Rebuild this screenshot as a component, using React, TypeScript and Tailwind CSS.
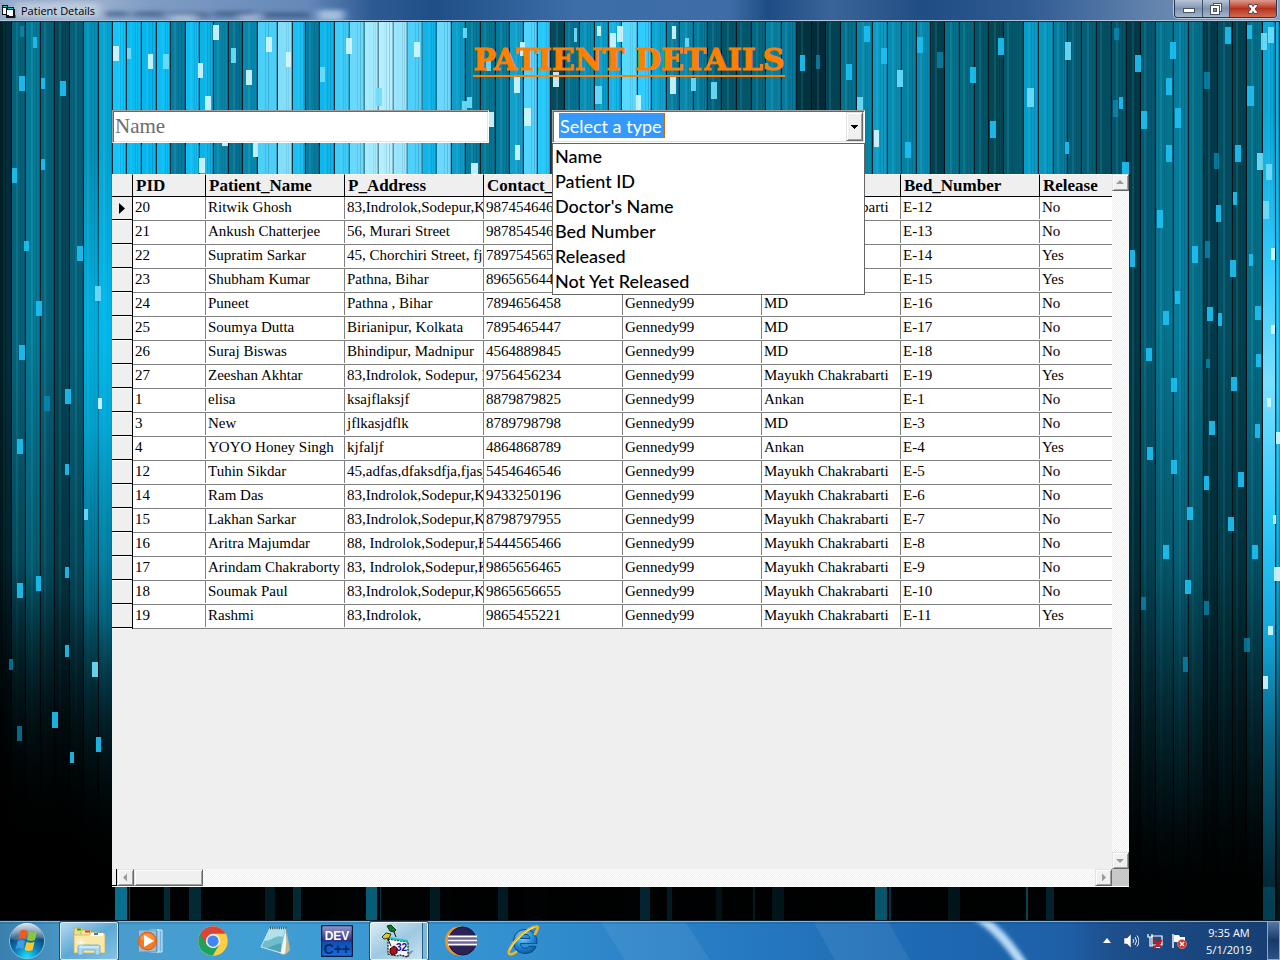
import { useState } from "react";

/* ---------- data ---------- */

const patients: string[][] = [
  ["20", "Ritwik Ghosh", "83,Indrolok,Sodepur,KOLKATA", "9874546461", "Gennedy99", "Mayukh Chakrabarti", "E-12", "No"],
  ["21", "Ankush Chatterjee", "56, Murari Street", "9878545462", "Gennedy99", "MD", "E-13", "No"],
  ["22", "Supratim Sarkar", "45, Chorchiri Street, fjasj", "7897545653", "Gennedy99", "MD", "E-14", "Yes"],
  ["23", "Shubham Kumar", "Pathna, Bihar", "8965656449", "Gennedy99", "MD", "E-15", "Yes"],
  ["24", "Puneet", "Pathna , Bihar", "7894656458", "Gennedy99", "MD", "E-16", "No"],
  ["25", "Soumya Dutta", "Birianipur, Kolkata", "7895465447", "Gennedy99", "MD", "E-17", "No"],
  ["26", "Suraj Biswas", "Bhindipur, Madnipur", "4564889845", "Gennedy99", "MD", "E-18", "No"],
  ["27", "Zeeshan Akhtar", "83,Indrolok, Sodepur, Kolkata", "9756456234", "Gennedy99", "Mayukh Chakrabarti", "E-19", "Yes"],
  ["1", "elisa", "ksajflaksjf", "8879879825", "Gennedy99", "Ankan", "E-1", "No"],
  ["3", "New", "jflkasjdflk", "8789798798", "Gennedy99", "MD", "E-3", "No"],
  ["4", "YOYO Honey Singh", "kjfaljf", "4864868789", "Gennedy99", "Ankan", "E-4", "Yes"],
  ["12", "Tuhin Sikdar", "45,adfas,dfaksdfja,fjasjf", "5454646546", "Gennedy99", "Mayukh Chakrabarti", "E-5", "No"],
  ["14", "Ram Das", "83,Indrolok,Sodepur,Kolkata", "9433250196", "Gennedy99", "Mayukh Chakrabarti", "E-6", "No"],
  ["15", "Lakhan Sarkar", "83,Indrolok,Sodepur,Kolkata", "8798797955", "Gennedy99", "Mayukh Chakrabarti", "E-7", "No"],
  ["16", "Aritra Majumdar", "88, Indrolok,Sodepur,Kolkata", "5444565466", "Gennedy99", "Mayukh Chakrabarti", "E-8", "No"],
  ["17", "Arindam Chakraborty", "83, Indrolok,Sodepur,Kolkata", "9865656465", "Gennedy99", "Mayukh Chakrabarti", "E-9", "No"],
  ["18", "Soumak Paul", "83,Indrolok,Sodepur,KOLKATA", "9865656655", "Gennedy99", "Mayukh Chakrabarti", "E-10", "No"],
  ["19", "Rashmi", "83,Indrolok,", "9865455221", "Gennedy99", "Mayukh Chakrabarti", "E-11", "Yes"],
];

const headings = ["PID", "Patient_Name", "P_Address", "Contact_No", "User_ID", "Doctor", "Bed_Number", "Release"];

const filters = ["Name", "Patient ID", "Doctor's Name", "Bed Number", "Released", "Not Yet Released"];

/* ---------- backdrop ---------- */

/* Left edge and colour of each vertical band; a band ends where the next one starts. */
const bands: [number, string][] = [
  [0, "#01303d"], [12, "#04627a"], [26, "#057a96"], [41, "#06617a"], [55, "#04485a"], [70, "#056078"],
  [84, "#0590b5"], [99, "#07a4d2"], [113, "#14c4fa"], [127, "#08bcf2"], [142, "#06b6ec"], [157, "#0bbdf2"],
  [171, "#067a9c"], [186, "#10bdf2"], [200, "#0cb4e6"], [214, "#0884a8"], [229, "#067090"], [243, "#0888ac"],
  [258, "#4ccff6"], [278, "#84defa"], [293, "#18c0f4"], [306, "#067da0"], [320, "#10b6ea"], [335, "#3fccf9"],
  [350, "#6ad8fb"], [365, "#a6eafe"], [379, "#b4eeff"], [394, "#9ae4fc"], [408, "#4ed0fa"], [423, "#10b4e8"],
  [437, "#6ad9fd"], [452, "#0c9dc8"], [466, "#067a9a"], [481, "#057591"], [496, "#067a9a"], [510, "#12a0cc"],
  [524, "#50d4ff"], [538, "#26c8fb"], [551, "#054a5c"], [565, "#067090"], [580, "#0a90b4"], [595, "#0a9cc4"],
  [609, "#10b4e8"], [622, "#58daff"], [638, "#30caff"], [652, "#0ca4d0"], [667, "#087fa0"], [680, "#0a88ac"],
  [694, "#067a9a"], [708, "#05607a"], [722, "#045468"], [737, "#04566a"], [752, "#056880"], [766, "#0680a0"],
  [782, "#07789a"], [797, "#023440"], [812, "#022c38"], [826, "#034555"], [841, "#05708c"], [857, "#0786a8"],
  [873, "#0b9cc6"], [888, "#088cb2"], [902, "#0680a0"], [917, "#0888ac"], [931, "#034050"], [945, "#05708a"],
  [960, "#05687f"], [975, "#045468"], [989, "#034654"], [1004, "#04586c"], [1024, "#0a9cc8"], [1039, "#0796be"],
  [1054, "#067c9c"], [1068, "#045c72"], [1082, "#045e74"], [1097, "#034e60"], [1112, "#035468"], [1127, "#023a48"],
  [1141, "#035a70"], [1156, "#05748f"], [1174, "#067b9b"], [1189, "#056d86"], [1204, "#023c4a"], [1218, "#034e60"],
  [1233, "#02414f"], [1247, "#056c86"], [1263, "#0aa8d8"], [1276, "#0bb4e6"], [1280, "#000000"],
];

/* x, y, width, height, brightness 0 (faint) to 3 (white) */
const sparks: number[][] = [
  [20, 26, 4, 11, 0], [33, 37, 4, 11, 1], [113, 46, 6, 15, 3], [127, 48, 4, 11, 2], [148, 54, 5, 15, 3], [163, 54, 6, 15, 2],
  [213, 25, 6, 15, 3], [198, 63, 5, 15, 3], [231, 48, 5, 15, 2], [246, 70, 6, 15, 3], [205, 96, 6, 14, 3], [266, 37, 6, 15, 3],
  [286, 52, 5, 15, 3], [320, 67, 5, 15, 2], [346, 38, 6, 16, 3], [414, 42, 6, 15, 3], [376, 88, 6, 18, 2], [19, 76, 6, 15, 1],
  [41, 78, 4, 11, 1], [60, 81, 6, 15, 1], [41, 159, 4, 11, 1], [12, 168, 5, 15, 1], [222, 140, 6, 6, 3], [253, 143, 5, 14, 3],
  [199, 158, 6, 15, 3], [463, 28, 4, 10, 2], [520, 42, 5, 14, 3], [574, 28, 3, 14, 2], [597, 26, 4, 10, 3], [610, 33, 6, 16, 3],
  [617, 26, 6, 16, 3], [672, 26, 4, 13, 3], [685, 38, 4, 9, 2], [486, 58, 5, 13, 2], [514, 77, 6, 16, 3], [553, 72, 6, 15, 3],
  [524, 108, 7, 18, 3], [595, 86, 7, 18, 2], [670, 77, 6, 17, 3], [636, 95, 5, 15, 3], [691, 78, 5, 13, 2], [711, 82, 6, 17, 2],
  [462, 101, 5, 9, 2], [467, 97, 5, 11, 2], [489, 112, 5, 15, 3], [515, 145, 5, 15, 3], [471, 163, 7, 12, 3], [800, 55, 5, 16, 1],
  [816, 55, 4, 14, 0], [846, 64, 6, 16, 1], [864, 26, 6, 16, 1], [857, 97, 6, 13, 2], [874, 130, 5, 17, 3], [881, 48, 6, 16, 1],
  [917, 37, 6, 16, 1], [937, 52, 6, 16, 0], [897, 70, 6, 17, 2], [998, 38, 6, 17, 1], [970, 67, 6, 16, 1], [990, 121, 6, 17, 1],
  [905, 142, 6, 16, 1], [1065, 42, 6, 18, 2], [1027, 88, 7, 19, 2], [1065, 142, 4, 12, 1], [1114, 28, 5, 12, 0], [1113, 100, 5, 17, 0],
  [1119, 97, 4, 12, 1], [1135, 55, 6, 17, 1], [1170, 42, 6, 17, 1], [1166, 78, 6, 17, 1], [1141, 111, 6, 18, 1], [1175, 108, 6, 20, 1],
  [1122, 162, 7, 20, 1], [1166, 145, 6, 17, 1], [1204, 72, 6, 17, 0], [1225, 27, 6, 17, 1], [1247, 25, 5, 14, 1], [1261, 33, 6, 17, 2],
  [1268, 27, 6, 16, 2], [1247, 86, 7, 20, 1], [1214, 153, 5, 16, 0], [1235, 145, 6, 17, 1], [1257, 153, 6, 17, 2], [1266, 164, 6, 16, 2],
  [1233, 192, 4, 13, 1], [1157, 210, 6, 18, 1], [1216, 205, 5, 17, 1], [1263, 201, 6, 18, 2], [1130, 250, 5, 17, 1], [1192, 246, 6, 17, 1],
  [1205, 241, 5, 17, 0], [1230, 260, 6, 17, 1], [1249, 254, 4, 12, 1], [1271, 248, 4, 12, 3], [1175, 291, 5, 13, 1], [1163, 311, 6, 14, 1],
  [1207, 307, 6, 14, 1], [1218, 313, 4, 13, 1], [1255, 306, 6, 14, 1], [1271, 325, 4, 9, 3], [1146, 348, 6, 13, 1], [1206, 359, 4, 9, 0],
  [1256, 354, 5, 13, 1], [1171, 378, 6, 14, 1], [1231, 377, 6, 14, 1], [1267, 398, 4, 9, 3], [1209, 421, 6, 14, 1], [1255, 424, 5, 14, 1],
  [1276, 432, 4, 12, 3], [1147, 447, 6, 13, 1], [1171, 460, 6, 14, 1], [1204, 476, 5, 14, 1], [1238, 472, 6, 15, 1], [1187, 507, 6, 13, 1],
  [1228, 517, 6, 14, 1], [1273, 515, 3, 9, 3], [1163, 545, 6, 14, 1], [1252, 545, 6, 14, 1], [1274, 567, 6, 14, 3], [1185, 580, 6, 14, 1],
  [1141, 597, 5, 13, 0], [1204, 601, 5, 14, 0], [1268, 626, 5, 9, 3], [1244, 638, 6, 14, 0], [1183, 657, 5, 15, 0], [1263, 676, 5, 13, 3],
  [24, 241, 5, 10, 1], [77, 246, 6, 15, 1], [95, 286, 6, 15, 2], [36, 301, 6, 15, 1], [19, 345, 6, 15, 1], [44, 396, 6, 15, 0],
  [65, 389, 6, 15, 1], [98, 398, 4, 11, 3], [17, 439, 6, 15, 1], [65, 464, 4, 11, 1], [84, 509, 4, 11, 2], [65, 567, 4, 11, 1],
  [36, 576, 5, 15, 1], [17, 583, 6, 15, 1], [9, 659, 4, 11, 0], [65, 645, 4, 12, 1], [92, 662, 6, 15, 2], [52, 712, 6, 16, 1],
  [17, 726, 5, 15, 0], [96, 737, 5, 15, 1], [70, 752, 4, 11, 1],
];

const sparkFill = ["#0891bb", "#1cc0f2", "#6fdcfb", "#d2f6ff"];

/* Faint glow that survives below the grid: x, width, opacity */
const embers: number[][] = [
  [115, 12, 0.85], [129, 1, 0.5], [164, 6, 0.3], [189, 12, 0.3], [265, 10, 0.2], [293, 8, 0.3], [366, 11, 0.7], [380, 1, 0.4],
  [430, 10, 0.2], [498, 10, 0.2], [640, 10, 0.28], [667, 5, 0.2], [716, 6, 0.12], [753, 2, 0.2], [772, 12, 0.15], [875, 12, 0.65], [889, 2, 0.4],
  [948, 12, 0.15], [1026, 2, 0.5], [1046, 8, 0.25], [1263, 12, 0.3],
];

function Backdrop() {
  return (
    <svg
      className="absolute inset-0 h-full w-full"
      viewBox="0 22 1280 898"
      preserveAspectRatio="none"
      shapeRendering="crispEdges"
      aria-hidden="true"
    >
      <defs>
        <linearGradient id="fade" x1="0" y1="0" x2="0" y2="1">
          <stop offset="0.35" stopColor="#000" stopOpacity="0" />
          <stop offset="0.6" stopColor="#000" stopOpacity="0.25" />
          <stop offset="0.78" stopColor="#000" stopOpacity="0.68" />
          <stop offset="0.9" stopColor="#000" stopOpacity="0.92" />
          <stop offset="0.96" stopColor="#000" stopOpacity="0.99" />
        </linearGradient>
        <linearGradient id="corner" gradientUnits="userSpaceOnUse" x1="0" y1="800" x2="110" y2="620">
          <stop offset="0" stopColor="#000" stopOpacity="0.95" />
          <stop offset="1" stopColor="#000" stopOpacity="0" />
        </linearGradient>
        <linearGradient id="beam" x1="0" y1="0" x2="0" y2="1">
          <stop offset="0.1" stopColor="#22c8fb" stopOpacity="0" />
          <stop offset="0.28" stopColor="#39ceff" />
          <stop offset="0.4" stopColor="#7be0ff" />
          <stop offset="0.55" stopColor="#2fccff" />
          <stop offset="0.68" stopColor="#12a8dc" />
          <stop offset="0.8" stopColor="#066482" />
          <stop offset="0.98" stopColor="#01222d" />
        </linearGradient>
        <linearGradient id="sideGlow" x1="0" y1="0" x2="0" y2="1">
          <stop offset="0" stopColor="#00c8ff" stopOpacity="0" />
          <stop offset="0.25" stopColor="#00c8ff" stopOpacity="0.5" />
          <stop offset="0.45" stopColor="#00c8ff" stopOpacity="0.6" />
          <stop offset="0.75" stopColor="#00a0d0" stopOpacity="0.2" />
          <stop offset="1" stopColor="#00a0d0" stopOpacity="0" />
        </linearGradient>
      </defs>
      <rect x="0" y="22" width="1280" height="898" fill="#000" />
      {bands.slice(0, -1).map(([x, fill], i) => {
        const width = bands[i + 1][0] - x;
        return (
          <g key={x}>
            <rect x={x} y="22" width={width} height="898" fill={fill} />
            <rect x={x + 3 + (i % 3)} y="22" width="2" height="898" fill="#5fdcff" opacity="0.12" />
            <rect x={x + 7 + (i % 2)} y="22" width="1" height="898" fill="#002030" opacity="0.1" />
            <rect x={x + 10} y="22" width="1" height="898" fill="#002030" opacity={i % 2 ? 0.08 : 0.16} />
            <rect x={x + width - 2} y="22" width="1" height="898" fill="#002436" opacity="0.25" />
            <rect x={x + width - 1} y="22" width="1" height="898" fill="#00080c" opacity={x > 330 && x < 430 ? 0.4 : 0.82} />
          </g>
        );
      })}
      <rect x="84" y="150" width="28" height="620" fill="url(#sideGlow)" />
      <rect x="0" y="22" width="1280" height="898" fill="url(#fade)" />
      <rect x="0" y="560" width="112" height="360" fill="url(#corner)" />
      <rect x="0" y="22" width="6" height="898" fill="#000" opacity="0.35" />
      <rect x="1263" y="22" width="12" height="898" fill="url(#beam)" />
      <rect x="1277" y="22" width="3" height="898" fill="url(#beam)" opacity="0.6" />
      {embers.map(([x, w, o]) => (
        <rect key={x} x={x} y="887" width={w} height="33" fill="#0a83a8" opacity={o} />
      ))}
      {sparks.map(([x, y, w, h, b], i) => (
        <rect key={i} x={x} y={y} width={w} height={h} fill={sparkFill[b]} opacity={b === 0 ? 0.7 : 0.92} />
      ))}
    </svg>
  );
}

/* ---------- window frame ---------- */

function FormIcon() {
  return (
    <svg width="14" height="14" viewBox="0 0 14 14" shapeRendering="crispEdges" aria-hidden="true">
      <path d="M0 1h6v2h6v2h1v9H4v-3H0z" fill="#111" />
      <path d="M1 4h3v6H1z" fill="#fff" />
      <path d="M1 2h4v1H1zM6 4h5v1H6z" fill="#19c5c9" />
      <path d="M5 6h6v5H5zM7 11h4v1H7z" fill="#fff" />
      <path d="M13 11h1v3h-1z" fill="#667" />
    </svg>
  );
}

function TitleBar() {
  return (
    <header className="relative flex h-[22px] shrink-0 items-start justify-between overflow-hidden border-b border-[#12324f] bg-linear-to-r from-[#a9bad0] via-[#1f4f8a] to-[#8ba3c2]">
      <svg className="absolute inset-0 h-full w-full" viewBox="0 0 1280 21" preserveAspectRatio="none" aria-hidden="true">
        <defs>
          <linearGradient id="bar" x1="0" y1="0" x2="1" y2="0">
            <stop offset="0" stopColor="#93abc9" />
            <stop offset="0.06" stopColor="#a3b6d0" />
            <stop offset="0.12" stopColor="#7f9cc4" />
            <stop offset="0.24" stopColor="#6488b8" />
            <stop offset="0.29" stopColor="#2e5a93" />
            <stop offset="0.34" stopColor="#1f4f86" />
            <stop offset="0.45" stopColor="#3d6ea8" />
            <stop offset="0.57" stopColor="#3e6ca6" />
            <stop offset="0.6" stopColor="#1e4c84" />
            <stop offset="0.65" stopColor="#3a6499" />
            <stop offset="0.72" stopColor="#204d84" />
            <stop offset="0.8" stopColor="#2f5a92" />
            <stop offset="0.9" stopColor="#6283ad" />
            <stop offset="1" stopColor="#8ba3c2" />
          </linearGradient>
          <filter id="soft">
            <feGaussianBlur stdDeviation="4 2" />
          </filter>
        </defs>
        <rect width="1280" height="21" fill="url(#bar)" />
        <g filter="url(#soft)">
          <path d="M104 14h24M134 14h30M168 15h40M214 14h40M262 15h48" stroke="#27456f" strokeWidth="5" opacity="0.6" />
          <rect x="170" y="15" width="26" height="6" fill="#c4d6ea" opacity="0.7" />
          <rect x="240" y="15" width="20" height="6" fill="#c4d6ea" opacity="0.6" />
          <rect x="318" y="10" width="26" height="11" fill="#b6d0ea" opacity="0.8" />
          <rect x="16" y="3" width="84" height="14" fill="#cbd6e4" opacity="0.7" />
        </g>
        <rect y="20" width="1280" height="1" fill="#b5c6db" />
      </svg>
      <div className="relative flex h-[21px] items-center gap-[5px] pl-[2px]">
        <FormIcon />
        <span className="font-['Open_Sans',sans-serif] text-[11px] leading-[16px] text-black">Patient Details</span>
      </div>
      <div className="relative mr-[3px] flex h-[18px] overflow-hidden rounded-b-[4px] border border-t-0 border-[#26364d] shadow-[0_0_0_1px_#b9c8da]">
        <button type="button" aria-label="Minimize" className="flex w-[28px] items-center justify-center border-r border-[#3d4f69] bg-linear-to-b from-[#b9c6d7] via-[#7f93b0] to-[#a5b6cb]">
          <svg width="14" height="12" viewBox="0 0 14 12" aria-hidden="true">
            <rect x="1.500" y="5.500" width="11" height="4" fill="#fff" stroke="#4a5362" />
          </svg>
        </button>
        <button type="button" aria-label="Restore" className="flex w-[27px] items-center justify-center border-r border-[#3d4f69] bg-linear-to-b from-[#b9c6d7] via-[#7f93b0] to-[#a5b6cb]">
          <svg width="14" height="14" viewBox="0 0 14 14" aria-hidden="true">
            <rect x="4.500" y="1.500" width="8" height="8" fill="#fff" stroke="#4a5362" />
            <rect x="1.500" y="3.500" width="9" height="9" fill="#fff" stroke="#4a5362" />
            <rect x="4.500" y="6.500" width="3" height="3" fill="#7f93b0" stroke="#4a5362" />
          </svg>
        </button>
        <button type="button" aria-label="Close" className="flex w-[46px] items-center justify-center bg-linear-to-b from-[#dc9a8e] via-[#b8301b] to-[#cf6a52]">
          <svg width="14" height="12" viewBox="0 0 14 12" aria-hidden="true">
            <path d="M2.500 1.500h3L7 3.500l1.500-2h3v1.500L9 6l2.500 3v1.500h-3L7 8.500l-1.500 2h-3V9L5 6 2.500 3z" fill="#fff" stroke="#53404a" />
          </svg>
        </button>
      </div>
    </header>
  );
}

/* ---------- search ---------- */

const sunken =
  "border border-t-[#a0a0a0] border-l-[#a0a0a0] border-r-white border-b-white bg-white shadow-[inset_1px_1px_0_#696969,inset_-1px_-1px_0_#e3e3e3]";

function TypePicker() {
  const [open, setOpen] = useState(true);
  const [value, setValue] = useState("Select a type");
  return (
    <div className="relative w-[313px] font-['Papyrus','Lato',sans-serif]">
      <div className={"flex h-[33px] items-stretch justify-between py-px pr-px pl-[6px] " + sunken}>
        <select
          aria-label="Search type"
          value={value}
          onChange={(e) => setValue(e.target.value)}
          className="mt-px h-[25px] w-[106px] appearance-none border-r border-[#c86a10] bg-[#3399ff] pl-px text-[18px] leading-[24px] text-white outline-none"
        >
          <option>Select a type</option>
          {filters.map((f) => (
            <option key={f}>{f}</option>
          ))}
        </select>
        <button
          type="button"
          aria-label="Show types"
          aria-expanded={open}
          onClick={() => setOpen(!open)}
          className="flex w-[17px] items-center justify-center border border-t-[#e3e3e3] border-r-[#696969] border-b-[#696969] border-l-[#e3e3e3] bg-[#f0f0f0] shadow-[inset_1px_1px_0_#fff,inset_-1px_-1px_0_#a0a0a0]"
        >
          <svg width="7" height="4" viewBox="0 0 7 4" shapeRendering="crispEdges" aria-hidden="true">
            <path d="M0 0h7v1H0zM1 1h5v1H1zM2 2h3v1H2zM3 3h1v1H3z" />
          </svg>
        </button>
      </div>
      {open && (
        <ul role="listbox" aria-label="Types" className="absolute inset-x-0 top-full z-10 border border-[#646464] bg-white">
          {filters.map((f) => (
            <li
              key={f}
              role="option"
              aria-selected={value === f}
              onClick={() => {
                setValue(f);
                setOpen(false);
              }}
              className="h-[25px] pl-[2px] text-[18px] leading-[24px] font-medium text-black"
            >
              {f}
            </li>
          ))}
        </ul>
      )}
    </div>
  );
}

/* ---------- grid ---------- */

const raised =
  "flex size-[17px] shrink-0 items-center justify-center border border-t-[#e3e3e3] border-r-[#696969] border-b-[#696969] border-l-[#e3e3e3] bg-[#f0f0f0] shadow-[inset_1px_1px_0_#fff,inset_-1px_-1px_0_#a0a0a0]";

const dither = "bg-[repeating-conic-gradient(#efefef_0_25%,#ffffff_0_50%)] bg-[length:2px_2px]";

function Arrow({ d }: { d: string }) {
  return (
    <svg width="9" height="9" viewBox="0 0 9 9" aria-hidden="true">
      <path d={d} fill="#9a9a9a" />
    </svg>
  );
}

function PatientGrid() {
  return (
    <section aria-label="Patients" className="flex min-h-0 flex-1 flex-col border-b border-white bg-[#efefef]">
      <div className="flex min-h-[460px] flex-1">
        <div className="min-w-0 flex-1 overflow-hidden">
          <table className="w-full min-w-[1000px] table-fixed border-separate border-spacing-0 font-['Palatino_Linotype','Liberation_Serif',serif] text-black">
            <colgroup>
              <col className="w-[21px]" />
              <col className="w-[73px]" />
              <col className="w-[139px]" />
              <col className="w-[139px]" />
              <col className="w-[139px]" />
              <col className="w-[139px]" />
              <col className="w-[139px]" />
              <col className="w-[139px]" />
              <col />
            </colgroup>
            <thead>
              <tr className="h-[23px]">
                <th className="border-t border-r border-b border-t-white border-r-black border-b-black p-0" />
                {headings.map((h) => (
                  <th
                    key={h}
                    scope="col"
                    className="overflow-hidden border-t border-r border-b border-t-white border-r-black border-b-black p-0 pt-px pl-[3px] text-left text-[17px] leading-[20px] font-bold whitespace-nowrap last:border-r-0"
                  >
                    {h}
                  </th>
                ))}
              </tr>
            </thead>
            <tbody>
              {patients.map((row, i) => (
                <tr key={row[0]} className="h-[24px]">
                  <td className="border-r border-black p-0 align-top">
                    <div className="flex h-[23px] items-center border-b border-black pl-[7px] shadow-[0_1px_0_#fff]">
                      {i === 0 && (
                        <svg width="6" height="11" viewBox="0 0 6 11" role="img" aria-label="Current row">
                          <path d="M0 0l6 5.500L0 11z" />
                        </svg>
                      )}
                    </div>
                  </td>
                  {row.map((cell, c) => (
                    <td key={c} className="group border-b border-[#808080] bg-white p-0 align-top">
                      <div className="h-[22px] border-r border-[#808080] group-last:border-r-0">
                        <div className="overflow-hidden pl-[2px] text-[15px] leading-[20px] whitespace-nowrap">{cell}</div>
                      </div>
                    </td>
                  ))}
                </tr>
              ))}
            </tbody>
          </table>
        </div>
        <div className={"flex w-[17px] shrink-0 flex-col justify-between " + dither}>
          <button type="button" aria-label="Scroll up" className={raised}>
            <Arrow d="M4 2l4 4H0z" />
          </button>
          <button type="button" aria-label="Scroll down" className={raised}>
            <Arrow d="M4 7l4-4H0z" />
          </button>
        </div>
      </div>
      <div className="flex h-[17px] shrink-0">
        <div className="w-[5px] shrink-0 border-r border-b border-black bg-[#efefef]" />
        <div className={"flex min-w-0 flex-1 " + dither}>
          <button type="button" aria-label="Scroll left" className={raised}>
            <Arrow d="M2 4.500l4-4v8z" />
          </button>
          <div className="w-[69px] border border-t-[#e3e3e3] border-r-[#696969] border-b-[#696969] border-l-[#e3e3e3] bg-[#f0f0f0] shadow-[inset_1px_1px_0_#fff,inset_-1px_-1px_0_#a0a0a0]" />
          <div className="flex-1" />
          <button type="button" aria-label="Scroll right" className={raised}>
            <Arrow d="M7 4.500l-4-4v8z" />
          </button>
        </div>
        <div className="w-[17px] shrink-0 bg-[#c8c8c8]" />
      </div>
    </section>
  );
}

/* ---------- taskbar ---------- */

function StartOrb() {
  return (
    <svg width="38" height="38" viewBox="0 0 38 38" aria-hidden="true">
      <defs>
        <radialGradient id="orb" cx="0.5" cy="0.95" r="0.95">
          <stop offset="0" stopColor="#1ee0ff" />
          <stop offset="0.35" stopColor="#0b86bd" />
          <stop offset="0.7" stopColor="#0e4676" />
          <stop offset="1" stopColor="#6d8fb0" />
        </radialGradient>
        <linearGradient id="orbShine" x1="0" y1="0" x2="0" y2="1">
          <stop offset="0" stopColor="#fff" stopOpacity="0.75" />
          <stop offset="1" stopColor="#fff" stopOpacity="0.12" />
        </linearGradient>
      </defs>
      <circle cx="19" cy="19" r="17.500" fill="url(#orb)" stroke="#7fc0e4" />
      <path d="M3 17a16 16 0 0 1 32 0c-9-3-23 4-32 0z" fill="url(#orbShine)" />
      <path d="M12.500 8.500c3-1.400 5-.9 7 .4l-2 8.600c-2.300-1.400-4.500-1.600-7.300-.4z" fill="#ee5a24" />
      <path d="M21 9.500c2.500 1.200 5 1.300 8 .1l-2 8.400c-3 1.200-5.400 1.200-8 .1z" fill="#8cc63f" />
      <path d="M9.800 18.700c3-1.200 5-.9 7.300.4l-2 8.200c-2.300-1.400-4.500-1.600-7.300-.4z" fill="#3f9be8" />
      <path d="M18.600 19.700c2.500 1.200 5 1.300 8 .1l-2 8.200c-3 1.200-5.400 1.200-8 .1z" fill="#fdc82f" />
    </svg>
  );
}

function ExplorerIcon() {
  return (
    <svg width="34" height="32" viewBox="0 0 34 32" aria-hidden="true">
      <path d="M2 5l1-2h7l1 2h2v22H2z" fill="#f3dc8a" stroke="#c9a548" strokeWidth="0.700" />
      <rect x="5" y="3.500" width="4" height="2" fill="#1aa53a" />
      <path d="M9 7l1-2h8l1 2h6v21H9z" fill="#f7e49b" stroke="#c9a548" strokeWidth="0.700" />
      <rect x="13" y="5.500" width="5" height="2" fill="#d8442c" />
      <path d="M2 10h15l1-2h14l1 2v18H2z" fill="#f9e9a8" stroke="#cfae55" strokeWidth="0.700" />
      <path d="M19 8h12v3H19z" fill="#fff" />
      <rect x="22" y="8" width="4" height="2" fill="#2a7fd4" />
      <path d="M6 30V22q0-2 2-2h18q2 0 2 2v8h-5v-5H11v5z" fill="#a9d8ef" stroke="#5fa5cf" strokeWidth="0.800" />
      <path d="M7 22h20" stroke="#e8f7ff" />
      <path d="M9 13v9M4.500 17.500h9M6 14.500l6 6M12 14.500l-6 6" stroke="#fff" strokeWidth="0.800" opacity="0.8" />
    </svg>
  );
}

function PlayerIcon() {
  return (
    <svg width="30" height="28" viewBox="0 0 30 28" aria-hidden="true">
      <path d="M16 3h10v22H16z" fill="#6fb4de" stroke="#dcecf8" />
      <path d="M13 3h10v22H13z" fill="#7fbce2" stroke="#dcecf8" />
      <rect x="2.500" y="3" width="18" height="22" fill="#8fc0e0" stroke="#5d96bf" />
      <circle cx="11.500" cy="14" r="9" fill="#f47a1f" stroke="#dd5c0e" />
      <path d="M4 12a8 8 0 0 1 15 0c-4 2-10 2-15 0z" fill="#ffa25c" opacity="0.6" />
      <path d="M8 8l10 6-10 6z" fill="#fff" />
    </svg>
  );
}

function ChromeIcon() {
  return (
    <svg width="30" height="30" viewBox="0 0 48 48" aria-hidden="true">
      <circle cx="24" cy="24" r="23.500" fill="#ffcd40" />
      <path d="M3.650 12.250A23.500 23.500 0 0 0 23.500 47.500L34 30 24 24z" fill="#1ea15d" />
      <path d="M24 12.250H44.350A23.500 23.500 0 0 0 3.650 12.250L13.800 29.870 24 24z" fill="#db4437" />
      <circle cx="24" cy="24" r="11.500" fill="#f1f1f1" />
      <circle cx="24" cy="24" r="9" fill="#4285f4" />
    </svg>
  );
}

function NotepadIcon() {
  return (
    <svg width="34" height="32" viewBox="0 0 34 32" aria-hidden="true">
      <path d="M28 5l2 22-5 3-5-3z" fill="#f4f7f7" stroke="#8b8f80" strokeWidth="0.700" />
      <path d="M29 8l3 17-5 5z" fill="#c5b98a" />
      <path d="M12 3h16l-5 25L3 22z" fill="#6fbccd" stroke="#e8f6fa" strokeWidth="0.800" />
      <path d="M12 4h15l-2 8C18 9 14 16 6 16z" fill="#c9ecf2" opacity="0.75" />
      <path d="M23 27L9 23l14-5z" fill="#34889c" opacity="0.5" />
      <path d="M12 3h17" stroke="#444" strokeWidth="2.500" strokeDasharray="1 1.200" />
    </svg>
  );
}

function DevIcon() {
  return (
    <svg width="32" height="32" viewBox="0 0 32 32" aria-hidden="true">
      <defs>
        <linearGradient id="dev" x1="0" y1="0" x2="0" y2="1">
          <stop offset="0" stopColor="#9a9ccc" />
          <stop offset="0.48" stopColor="#2c3385" />
          <stop offset="0.55" stopColor="#0d4fb4" />
          <stop offset="1" stopColor="#1d6ee0" />
        </linearGradient>
      </defs>
      <rect x="0.500" y="0.500" width="31" height="31" rx="1.500" fill="url(#dev)" stroke="#101a3c" strokeWidth="1.500" />
      <text x="16" y="15" textAnchor="middle" fontFamily="Liberation Sans, sans-serif" fontWeight="bold" fontSize="12" fill="#fff">DEV</text>
      <text x="16" y="29" textAnchor="middle" fontFamily="Liberation Sans, sans-serif" fontWeight="bold" fontSize="14" fill="#062a66">C++</text>
    </svg>
  );
}

function BasicIcon() {
  return (
    <svg width="32" height="34" viewBox="0 0 32 34" aria-hidden="true">
      <path d="M20 32l10-5 3-1-6 7z" fill="#6f7f8c" opacity="0.7" />
      <path d="M7 15l20 3v15l-8-2-3 1-9-2z" fill="#f4f4f4" stroke="#111" strokeWidth="1.200" strokeDasharray="2 1" />
      <path d="M8 14l19 3" stroke="#19c5c9" strokeWidth="2" />
      <path d="M6 2l4-1 5 5-2 2-4-1z" fill="#0b7a1c" stroke="#032" />
      <path d="M1 13l4-4 5 1-2 4-5 1z" fill="#d8cc1c" stroke="#332" />
      <path d="M13 8l2 5M7 15l3 7" stroke="#111" />
      <path d="M9 25l4-3 3 2v5l-4 2-3-2z" fill="#b50f16" stroke="#300" />
      <text x="15" y="27" fontFamily="Liberation Sans, sans-serif" fontWeight="bold" fontSize="10" fill="#10108c">32</text>
    </svg>
  );
}

function EclipseIcon() {
  return (
    <svg width="34" height="32" viewBox="0 0 34 32" aria-hidden="true">
      <ellipse cx="15" cy="16" rx="14" ry="14.500" fill="#f7941e" />
      <circle cx="18.500" cy="16" r="14" fill="#2c2255" stroke="#1a1438" />
      <path d="M4 11.500h29M4 15.500h29M4 19.500h29" stroke="#fff" strokeWidth="2" />
      <path d="M4 13.500h29M4 17.500h29" stroke="#6d63a0" strokeWidth="1" />
    </svg>
  );
}

function ExplorerEIcon() {
  return (
    <svg width="34" height="32" viewBox="0 0 34 32" aria-hidden="true">
      <defs>
        <radialGradient id="ie" cx="0.4" cy="0.3" r="0.8">
          <stop offset="0" stopColor="#8edaf8" />
          <stop offset="0.5" stopColor="#1f8fd8" />
          <stop offset="1" stopColor="#084c94" />
        </radialGradient>
      </defs>
      <path
        d="M31 18.500H14.500c.3 3.200 2 4.800 4.600 4.800 1.900 0 3.200-.7 4-2h7c-1.700 4.800-5.700 7.200-10.900 7.200C12 28.500 7.500 23.500 7.500 16.500S12 4.500 19.200 4.500C27 4.500 31.400 10 31 18.500zM24 13.500c-.3-2.600-2-4.200-4.600-4.200s-4.300 1.600-4.800 4.200z"
        fill="url(#ie)"
        stroke="#084a85"
      />
      <path d="M29 9c3-5 4-8 1-7.500C23 2 6 16 3 26c-1 4 2 4.500 7 1" fill="none" stroke="#f2b61c" strokeWidth="2.600" strokeLinecap="round" />
      <path d="M28 2.500C21 5 8 16 4 25" fill="none" stroke="#ffe694" strokeWidth="1" />
    </svg>
  );
}

const activeTask =
  "border border-[#d7ebf7] bg-linear-to-br from-[#b4d9ee] via-[#5ba9d6] to-[#86c2e3] shadow-[0_0_0_1px_#1c4f78]";
const openTask = "border border-[#eef6fb] bg-linear-to-br from-[#dcebf4] via-[#9cc9e2] to-[#cde4f0] shadow-[0_0_0_1px_#1c4f78]";

const tasks = [
  { name: "Windows Explorer", icon: <ExplorerIcon />, look: activeTask, stacked: false },
  { name: "Media Player", icon: <PlayerIcon />, look: "", stacked: false },
  { name: "Chrome", icon: <ChromeIcon />, look: "", stacked: false },
  { name: "Notepad", icon: <NotepadIcon />, look: "", stacked: false },
  { name: "Dev-C++", icon: <DevIcon />, look: "", stacked: false },
  { name: "Visual Basic", icon: <BasicIcon />, look: openTask, stacked: true },
  { name: "Eclipse", icon: <EclipseIcon />, look: "", stacked: false },
  { name: "Internet Explorer", icon: <ExplorerEIcon />, look: "", stacked: false },
];

function Taskbar() {
  return (
    <footer className="relative flex h-[40px] shrink-0 items-stretch justify-between overflow-hidden border-t border-[#0c1c2a] bg-[#2b80c4]">
      <svg className="absolute inset-0 h-full w-full" viewBox="0 0 1280 39" preserveAspectRatio="none" aria-hidden="true">
        <defs>
          <linearGradient id="task" x1="0" y1="0" x2="1" y2="0">
            <stop offset="0" stopColor="#3a7fae" />
            <stop offset="0.06" stopColor="#4c9cca" />
            <stop offset="0.2" stopColor="#419fd4" />
            <stop offset="0.4" stopColor="#3390d0" />
            <stop offset="0.55" stopColor="#277dc3" />
            <stop offset="0.72" stopColor="#1e69b3" />
            <stop offset="0.83" stopColor="#1d60a8" />
            <stop offset="0.87" stopColor="#1d4f8c" />
            <stop offset="1" stopColor="#163d70" />
          </linearGradient>
          <filter id="glow">
            <feGaussianBlur stdDeviation="2" />
          </filter>
        </defs>
        <rect width="1280" height="39" fill="url(#task)" />
        <path d="M600 0h85l25 39h-85zM813 0h75l22 39h-75z" fill="#fff" opacity="0.07" />
        <path d="M975 -6Q1000 8 1024 45" fill="none" stroke="#b9dcf8" strokeWidth="9" filter="url(#glow)" />
        <rect width="1280" height="1" fill="#9dbdd4" opacity="0.85" />
        <rect y="1" width="1280" height="2" fill="#0a3560" opacity="0.15" />
      </svg>
      <nav aria-label="Taskbar" className="relative flex items-stretch">
        <button type="button" aria-label="Start" className="flex w-[60px] items-center pl-[8px]">
          <StartOrb />
        </button>
        <div className="flex gap-[4px] pt-px">
          {tasks.map((t) => (
            <button key={t.name} type="button" aria-label={t.name} className={"flex w-[58px] items-stretch rounded-[2px] " + t.look}>
              <span className="flex flex-1 items-center justify-center">{t.icon}</span>
              {t.stacked && <span className="w-[5px] border-l border-[#2c5d85] bg-[#7db8da]" />}
            </button>
          ))}
        </div>
      </nav>
      <div className="relative flex items-center">
        <div className="flex items-center gap-[8px]">
          <button type="button" aria-label="Show hidden icons" className="flex size-[16px] items-center justify-center">
            <svg width="8" height="5" viewBox="0 0 8 5" aria-hidden="true">
              <path d="M4 0l4 5H0z" fill="#fff" />
            </svg>
          </button>
          <svg width="16" height="16" viewBox="0 0 16 16" role="img" aria-label="Volume">
            <path d="M1 5h3l4-4v14l-4-4H1z" fill="#fff" stroke="#26364d" strokeWidth="0.500" />
            <path d="M10 6q1.500 2 0 4M12 4q3 4 0 8M14 2.500q4 5.500 0 11" fill="none" stroke="#e6eef6" />
          </svg>
          <svg width="16" height="16" viewBox="0 0 16 16" role="img" aria-label="Network disconnected">
            <path d="M5 3h10v9H5zM7 14.500h6" fill="#274b74" stroke="#fff" strokeWidth="1.200" />
            <path d="M1 1v3h4V1M3 4v9h3" fill="none" stroke="#fff" strokeWidth="1.200" />
            <path d="M7 7l8 8M15 7l-8 8" stroke="#e01414" strokeWidth="2" />
          </svg>
          <svg width="16" height="16" viewBox="0 0 16 16" role="img" aria-label="Action Center alert">
            <path d="M2 1v14" stroke="#fff" strokeWidth="1.400" />
            <path d="M3 2h5l1 2h5v6H8L7 9H3z" fill="#fff" />
            <circle cx="11" cy="11" r="4.500" fill="#d8281c" stroke="#f4b5ae" strokeWidth="0.600" />
            <path d="M9 9l4 4M13 9l-4 4" stroke="#fff" strokeWidth="1.500" />
          </svg>
        </div>
        <div className="w-[80px] pl-[4px] text-center font-['Open_Sans',sans-serif] text-[11px] leading-[17px] text-white">
          <div>9:35 AM</div>
          <div>5/1/2019</div>
        </div>
        <button type="button" aria-label="Show desktop" className="h-full w-[13px] border border-[#8fa9c6] bg-linear-to-b from-[#5578a2] via-[#173a68] to-[#2c5286]" />
      </div>
    </footer>
  );
}

/* ---------- page ---------- */

export default function App() {
  return (
    <div className="flex min-h-screen flex-col bg-black">
      <TitleBar />
      <main className="relative flex flex-1 flex-col overflow-hidden">
        <Backdrop />
        <div className="relative flex flex-1 flex-col pt-[23px] pb-[33px]">
          <div className="mr-[134px] ml-[112px] flex justify-center">
            <h1 className="border-b-2 border-[#ff8000] font-['Stencil','DejaVu_Serif',serif] text-[30px] leading-[30px] font-bold text-[#ff8000] uppercase [-webkit-text-stroke:1px_#ff8000]">
              Patient Details
            </h1>
          </div>
          <div className="mr-[151px] ml-[112px] flex flex-1 flex-col pt-[33px]">
            <form className="flex gap-[63px] pb-[31px]" onSubmit={(e) => e.preventDefault()}>
              <input
                type="text"
                aria-label="Name"
                placeholder="Name"
                className={
                  "h-[33px] w-[377px] px-[2px] font-['Palatino_Linotype','Liberation_Serif',serif] text-[21px] text-black outline-none placeholder:text-[#6d6d6d] " +
                  sunken
                }
              />
              <TypePicker />
            </form>
            <PatientGrid />
          </div>
        </div>
      </main>
      <Taskbar />
    </div>
  );
}
